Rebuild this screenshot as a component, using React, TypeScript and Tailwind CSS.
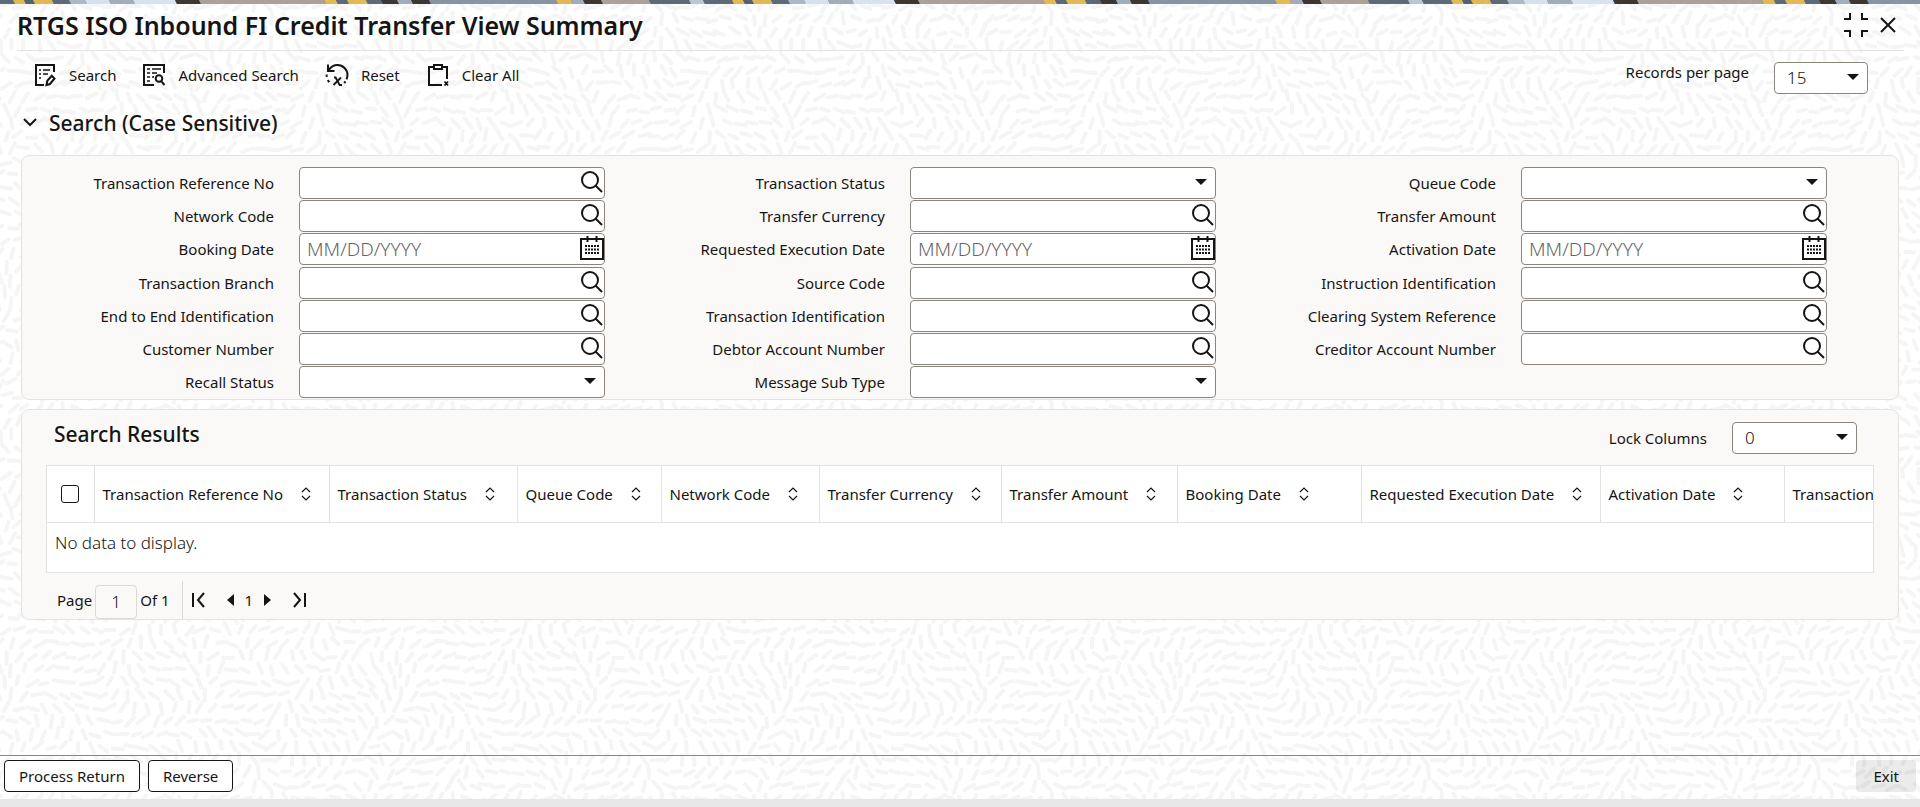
import { useState } from "react";

type Kind = "lov" | "date" | "select";

const fields: { label: string; kind: Kind }[] = [
  { label: "Transaction Reference No", kind: "lov" },
  { label: "Transaction Status", kind: "select" },
  { label: "Queue Code", kind: "select" },
  { label: "Network Code", kind: "lov" },
  { label: "Transfer Currency", kind: "lov" },
  { label: "Transfer Amount", kind: "lov" },
  { label: "Booking Date", kind: "date" },
  { label: "Requested Execution Date", kind: "date" },
  { label: "Activation Date", kind: "date" },
  { label: "Transaction Branch", kind: "lov" },
  { label: "Source Code", kind: "lov" },
  { label: "Instruction Identification", kind: "lov" },
  { label: "End to End Identification", kind: "lov" },
  { label: "Transaction Identification", kind: "lov" },
  { label: "Clearing System Reference", kind: "lov" },
  { label: "Customer Number", kind: "lov" },
  { label: "Debtor Account Number", kind: "lov" },
  { label: "Creditor Account Number", kind: "lov" },
  { label: "Recall Status", kind: "select" },
  { label: "Message Sub Type", kind: "select" },
];

const columns = [
  { label: "Transaction Reference No", width: 235 },
  { label: "Transaction Status", width: 188 },
  { label: "Queue Code", width: 144 },
  { label: "Network Code", width: 158 },
  { label: "Transfer Currency", width: 182 },
  { label: "Transfer Amount", width: 176 },
  { label: "Booking Date", width: 184 },
  { label: "Requested Execution Date", width: 239 },
  { label: "Activation Date", width: 184 },
  { label: "Transaction", width: 200 },
];

// [start, end, fill] inside one repeat of the top strip
const stripe: [number, number, string][] = [
  [0, 14, "#5d6a78"],
  [14, 25, "#e3b953"],
  [25, 34, "#56626f"],
  [34, 53, "#e0b856"],
  [53, 70, "#5d6a78"],
  [70, 86, "#a9b9c9"],
  [86, 110, "#d6e0ee"],
  [110, 134, "#a3adba"],
  [134, 176, "#d9e2ef"],
  [176, 200, "#3d3733"],
  [200, 325, "#aaa29a"],
  [325, 337, "#e3b953"],
  [337, 348, "#5d6a78"],
  [348, 367, "#e3b953"],
  [367, 382, "#5d6a78"],
  [382, 398, "#3d3733"],
  [398, 412, "#a3adba"],
  [412, 430, "#3d3733"],
  [430, 557, "#8794a3"],
  [557, 572, "#e3b953"],
  [572, 584, "#a3adba"],
  [584, 602, "#3d3733"],
  [602, 650, "#aaa29a"],
  [650, 690, "#5d6a78"],
  [690, 704, "#b9c6d5"],
  [704, 719, "#5d6a78"],
];

const TILE = 390;
const CELL = 13;

const noise = (n: number) => {
  const v = Math.sin(n * 127.1 + 11.7) * 43758.5453;
  return v - Math.floor(v);
};

// short dashes that follow a wavy field, seamless at the tile's edges
const dashes: string[] = [];
const count = TILE / CELL;
for (let row = -1; row <= count; row++) {
  for (let col = -1; col <= count; col++) {
    const r = (row + count) % count;
    const c = (col + count) % count;
    const seed = r * count + c;
    const u = (c / count) * Math.PI * 2;
    const v = (r / count) * Math.PI * 2;
    const angle =
      1.4 * Math.sin(u * 2 + Math.cos(v)) +
      1.6 * Math.cos(v * 2 + Math.sin(u)) +
      (noise(seed) - 0.5) * 0.6;
    const half = 4 + noise(seed + 5000) * 2;
    const x = col * CELL + 6 + (noise(seed + 9000) - 0.5) * 4 + (r % 2) * 6;
    const y = row * CELL + 6 + (noise(seed + 7000) - 0.5) * 4;
    const dx = Math.cos(angle) * half;
    const dy = Math.sin(angle) * half;
    dashes.push(
      `M${(x - dx).toFixed(1)} ${(y - dy).toFixed(1)}L${(x + dx).toFixed(1)} ${(y + dy).toFixed(1)}`
    );
  }
}

const Texture = () => (
  <svg
    className="pointer-events-none absolute inset-0 -z-10 h-full w-full"
    aria-hidden="true"
  >
    <defs>
      <pattern
        id="texture"
        width={TILE}
        height={TILE}
        patternUnits="userSpaceOnUse"
      >
        <path
          d={dashes.join("")}
          stroke="#f5f5f5"
          strokeWidth="4"
          strokeLinecap="round"
        />
      </pattern>
    </defs>
    <rect width="100%" height="100%" fill="url(#texture)" />
  </svg>
);

const Strip = () => (
  <svg className="block h-1 w-full" aria-hidden="true">
    <defs>
      <pattern
        id="strip"
        width="719"
        height="4"
        patternUnits="userSpaceOnUse"
      >
        <rect width="719" height="4" fill="#5d6a78" />
        {stripe.map(([from, to, fill]) => (
          <path
            key={from}
            d={`M${from - 1} 0H${to - 1}L${to + 1} 4H${from + 1}Z`}
            fill={fill}
          />
        ))}
      </pattern>
    </defs>
    <rect width="100%" height="4" fill="url(#strip)" />
  </svg>
);

const line = {
  fill: "none",
  stroke: "#161513",
  strokeWidth: 2,
  "aria-hidden": true,
} as const;

const SearchDocIcon = () => (
  <svg width="24" height="24" viewBox="0 0 24 24" {...line}>
    <path d="M11 22H3V2h18v7" />
    <path d="M6 7h2M10 7h7M6 11h2M10 11h5M6 15h2" strokeWidth="1.6" />
    <path d="M13.500 22l.8-4.200 4.500-5 2.700 2.700-4.500 5.500-3.500 1z" />
  </svg>
);

const AdvancedIcon = () => (
  <svg width="24" height="24" viewBox="0 0 24 24" {...line}>
    <path d="M12 22H2V2h20v8" />
    <path
      d="M5 6h3M10 6h9M5 10h3M10 10h5M5 14h3M10 14h2M5 18h3"
      strokeWidth="1.6"
    />
    <circle cx="17" cy="15.5" r="3.3" />
    <path d="M19.2 18.2L22.5 22" />
  </svg>
);

const ResetIcon = () => (
  <svg width="24" height="24" viewBox="0 0 24 24" {...line}>
    <path d="M3 1.500V8h6.500" />
    <path d="M3.500 7.500C6 3.500 9 2 12.500 2 18 2 22.500 6.500 22.500 12c0 1.600-.4 3-1 4.300" />
    <path d="M1.500 11.500l.3 2.300M2.800 17l1.400 2.200M20.500 18.500l-1.300 1.500" />
    <path d="M9 14.500h1.600l4 7.500H17M16 14.500L8.500 22" strokeWidth="1.8" />
  </svg>
);

const ClearIcon = () => (
  <svg width="24" height="24" viewBox="0 0 24 24" {...line}>
    <path d="M8 4H3v18h13M16 4h5v12" />
    <path d="M8 2h8v4H8z" />
    <path d="M18.500 18.500l3.500 4M22 18.500l-3.500 4" strokeWidth="1.8" />
  </svg>
);

const MagnifierIcon = () => (
  <svg width="24" height="24" viewBox="0 0 24 24" {...line}>
    <circle cx="10" cy="10" r="8" />
    <path d="M15.500 15.500L22 22" />
  </svg>
);

const CalendarIcon = () => (
  <svg width="24" height="24" viewBox="0 0 24 24" {...line}>
    <path d="M1 3h22v20H1z" />
    <path d="M7.500 0v6M16.500 0v6" />
    <path
      d="M5 10h14M5 13.500h14M5 17h14"
      strokeWidth="2"
      strokeDasharray="2 1"
    />
  </svg>
);

const Arrow = () => (
  <svg width="12" height="6" viewBox="0 0 12 6" aria-hidden="true">
    <path d="M0 0h12L6 6z" fill="#161513" />
  </svg>
);

const SortIcon = () => (
  <svg width="10" height="14" viewBox="0 0 10 14" {...line} strokeWidth={1.2}>
    <path d="M1 5l4-4 4 4M1 9l4 4 4-4" />
  </svg>
);

const Field = ({ label, kind }: { label: string; kind: Kind }) => {
  const id = label.toLowerCase().replaceAll(" ", "-");
  const box =
    "h-8 w-full appearance-none rounded border border-[#8b8580] bg-white pl-[7px] pr-8 text-[19px] leading-6 font-light placeholder:text-[#656565]";
  return (
    <div
      className={`grid grid-cols-[252fr_25fr_306fr_28fr] items-center ${
        kind === "date" ? "pb-px" : ""
      }`}
    >
      <label htmlFor={id} className="pb-px text-right whitespace-nowrap">
        {label}
      </label>
      <div className="relative col-start-3">
        {kind === "select" ? (
          <>
            <select id={id} className={box}>
              <option></option>
            </select>
            <span className="pointer-events-none absolute top-3 right-[9px]">
              <Arrow />
            </span>
          </>
        ) : (
          <>
            <input
              id={id}
              type="text"
              placeholder={kind === "date" ? "MM/DD/YYYY" : undefined}
              className={box}
            />
            <button
              type="button"
              aria-label={`Pick ${label}`}
              className="absolute top-[3px] right-px"
            >
              {kind === "date" ? <CalendarIcon /> : <MagnifierIcon />}
            </button>
          </>
        )}
      </div>
    </div>
  );
};

const App = () => {
  const [open, setOpen] = useState(true);

  return (
    <div className="relative isolate flex min-h-screen flex-col overflow-hidden bg-white font-['Noto_Sans',sans-serif] text-[15px] leading-5 text-[#161513]">
      <Texture />
      <Strip />

      <header className="mr-4 ml-[17px] flex h-[47px] items-center justify-between border-b border-[#e4e3e2] pb-1">
        <h1 className="text-[25px] leading-8 font-semibold">
          RTGS ISO Inbound FI Credit Transfer View Summary
        </h1>
        <div className="flex items-center gap-2 pr-[6px]">
          <button type="button" aria-label="Restore">
            <svg width="28" height="26" viewBox="0 0 28 26" {...line}>
              <path d="M8 1v6H2M20 1v6h6M8 25v-6H2M20 25v-6h6" />
            </svg>
          </button>
          <button type="button" aria-label="Close">
            <svg width="20" height="20" viewBox="0 0 20 20" {...line}>
              <path d="M3 3l14 14M17 3L3 17" />
            </svg>
          </button>
        </div>
      </header>

      <div className="flex items-start justify-between pt-[11px] pr-[52px] pl-[33px]">
        <div className="flex gap-[26px] pt-px">
          <button type="button" className="flex items-center gap-3">
            <SearchDocIcon />
            Search
          </button>
          <button type="button" className="flex items-center gap-3">
            <AdvancedIcon />
            Advanced Search
          </button>
          <button type="button" className="flex items-center gap-3">
            <ResetIcon />
            Reset
          </button>
          <button type="button" className="flex items-center gap-3">
            <ClearIcon />
            Clear All
          </button>
        </div>
        <div className="flex items-start gap-[25px]">
          <label htmlFor="records">Records per page</label>
          <div className="relative">
            <select
              id="records"
              className="h-8 w-[94px] appearance-none rounded border border-[#8b8580] bg-white px-3 text-[17px] leading-6 font-light"
            >
              <option>15</option>
            </select>
            <span className="pointer-events-none absolute top-3 right-[9px]">
              <Arrow />
            </span>
          </div>
        </div>
      </div>

      <main className="px-[21px]">
        <h2>
          <button
            type="button"
            aria-expanded={open}
            onClick={() => setOpen(!open)}
            className="flex items-center gap-[10px] pt-[15px] pb-[18px] text-[21px] leading-7 font-medium"
          >
            <svg width="18" height="18" viewBox="0 0 18 18" {...line}>
              <path d="M3 5l6 6 6-6" />
            </svg>
            Search (Case Sensitive)
          </button>
        </h2>

        {open && (
          <section className="grid grid-cols-3 gap-y-px rounded-lg border border-[#e4e3e2] bg-[#fbf9f8] pt-[11px] pr-[43px] pb-px">
            {fields.map((field) => (
              <Field key={field.label} {...field} />
            ))}
          </section>
        )}

        <section className="mt-[9px] rounded-lg border border-[#e4e3e2] bg-[#fbf9f8] px-6">
          <div className="flex justify-between pt-3 pr-[17px] pb-[11px] pl-2">
            <h2 className="text-[21px] leading-6 font-medium">
              Search Results
            </h2>
            <div className="flex items-center gap-[25px]">
              <label htmlFor="lock">Lock Columns</label>
              <div className="relative">
                <select
                  id="lock"
                  className="h-8 w-[125px] appearance-none rounded border border-[#8b8580] bg-white px-3 text-[17px] leading-6 font-light"
                >
                  <option>0</option>
                </select>
                <span className="pointer-events-none absolute top-3 right-[9px]">
                  <Arrow />
                </span>
              </div>
            </div>
          </div>

          <div className="overflow-hidden border border-[#e4e3e2] bg-white">
            <table className="w-max table-fixed border-collapse">
              <thead>
                <tr className="h-14 border-b border-[#e4e3e2]">
                  <th className="w-[47px] border-r border-[#e4e3e2]">
                    <input
                      type="checkbox"
                      aria-label="Select all rows"
                      className="mx-auto block h-[18px] w-[18px] appearance-none rounded-[3px] border border-[#161513] bg-white"
                    />
                  </th>
                  {columns.map((column) => (
                    <th
                      key={column.label}
                      className="border-r border-[#e4e3e2] px-2 text-left font-normal"
                      style={{ width: column.width, minWidth: column.width }}
                    >
                      <button
                        type="button"
                        className="flex items-center gap-[18px] whitespace-nowrap"
                      >
                        {column.label}
                        <SortIcon />
                      </button>
                    </th>
                  ))}
                </tr>
              </thead>
              <tbody>
                <tr>
                  <td
                    colSpan={columns.length + 1}
                    className="px-2 pt-2 pb-[17px] text-[17px] leading-6 font-light"
                  >
                    No data to display.
                  </td>
                </tr>
              </tbody>
            </table>
          </div>

          <nav
            aria-label="Pagination"
            className="flex items-center pt-2 pl-[11px]"
          >
            <label htmlFor="page">Page</label>
            <input
              id="page"
              type="text"
              defaultValue="1"
              className="mt-1 mr-[3px] ml-[3px] h-[34px] w-[42px] rounded border border-[#dcdad8] text-center text-[17px] font-light"
            />
            Of 1
            <span className="mr-2 ml-3 h-[38px] w-px bg-[#dcdad8]" />
            <button type="button" aria-label="First page">
              <svg width="16" height="16" viewBox="0 0 16 16" {...line}>
                <path d="M2 1v14M13 1L7 8l6 7" />
              </svg>
            </button>
            <button type="button" aria-label="Previous page" className="ml-5">
              <svg width="8" height="12" viewBox="0 0 8 12">
                <path d="M7 0v12L0 6z" fill="#161513" />
              </svg>
            </button>
            <span className="mx-[10px]">1</span>
            <button type="button" aria-label="Next page">
              <svg width="8" height="12" viewBox="0 0 8 12">
                <path d="M1 0v12l7-6z" fill="#161513" />
              </svg>
            </button>
            <button type="button" aria-label="Last page" className="ml-5">
              <svg width="16" height="16" viewBox="0 0 16 16" {...line}>
                <path d="M14 1v14M3 1l6 7-6 7" />
              </svg>
            </button>
          </nav>
        </section>
      </main>

      <footer className="mt-auto flex items-center gap-2 border-t border-[#8b8580] px-1 pt-1 pb-[7px]">
        <button
          type="button"
          className="h-8 rounded border border-[#161513] bg-white px-[14px]"
        >
          Process Return
        </button>
        <button
          type="button"
          className="h-8 rounded border border-[#161513] bg-white px-[14px]"
        >
          Reverse
        </button>
        <button
          type="button"
          className="ml-auto h-8 rounded bg-black/8 px-[17px]"
        >
          Exit
        </button>
      </footer>
      <div className="h-2 bg-[#e7e7e7]" />
    </div>
  );
};

export default App;
